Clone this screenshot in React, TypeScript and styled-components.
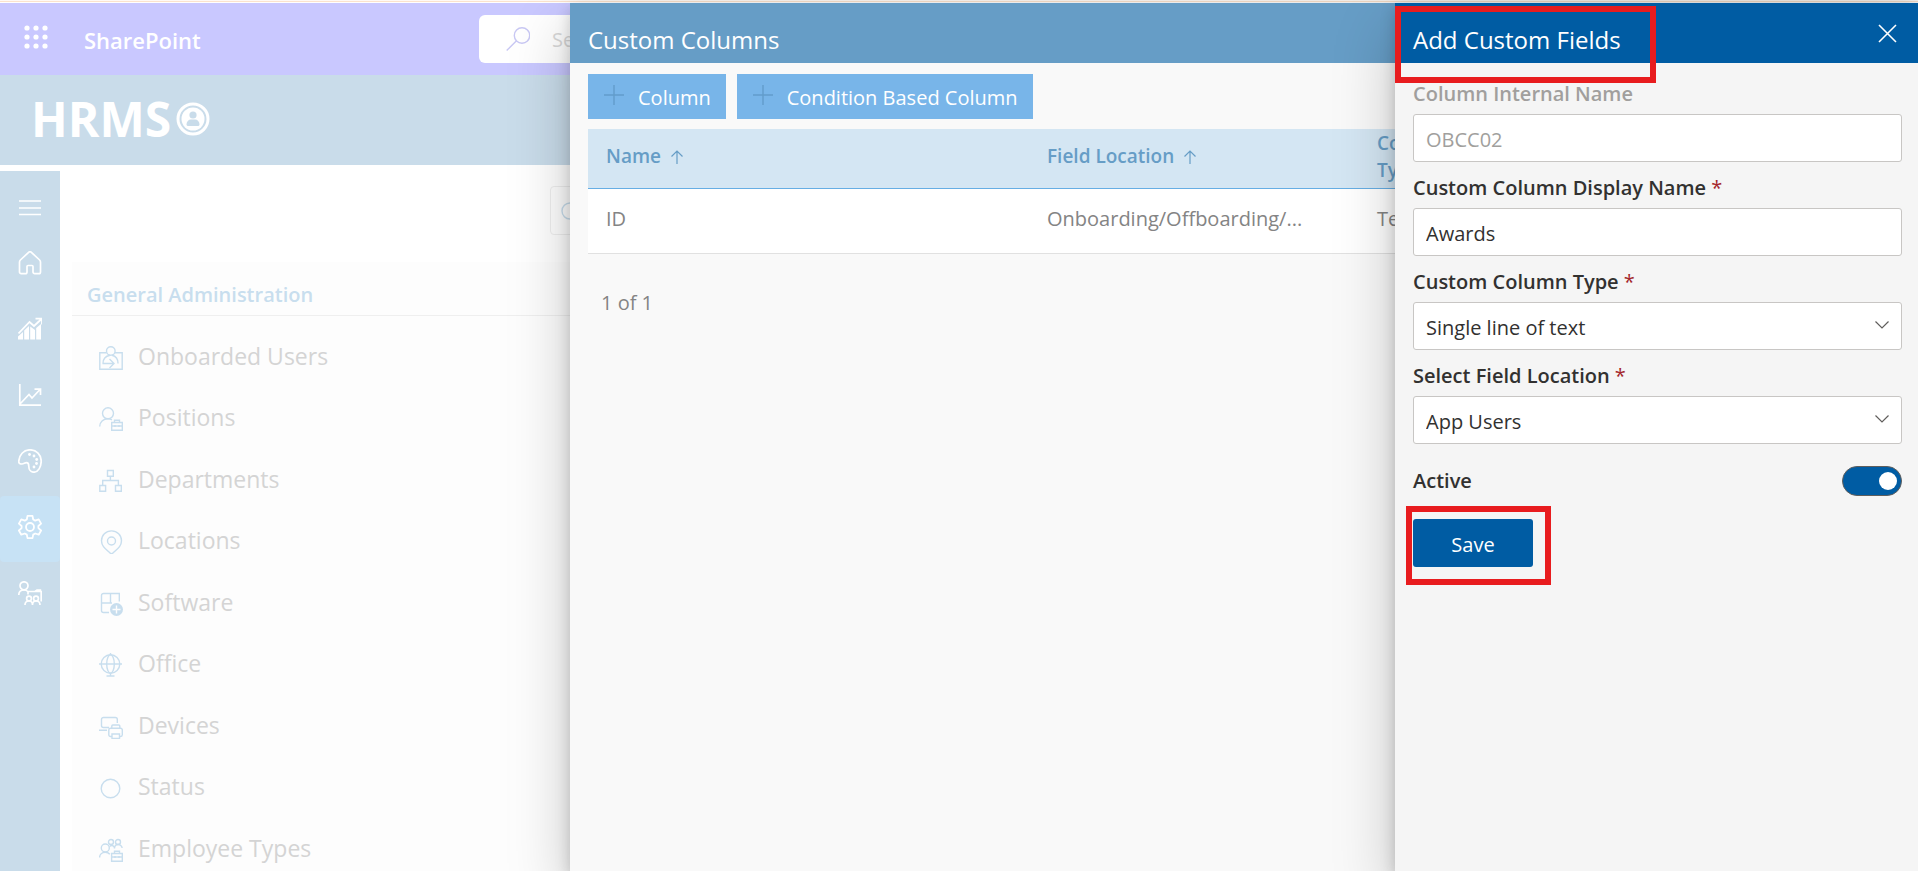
import React, { useState } from "react";
import styled, { createGlobalStyle } from "styled-components";

const sans = `"Segoe UI", "Open Sans", "Noto Sans", sans-serif`;

const GlobalStyle = createGlobalStyle`
  *, *::before, *::after { box-sizing: border-box; }
  body { margin: 0; background: #ffffff; overflow: hidden; font-family: ${sans}; color: #323130; }
  button, input, select { font-family: inherit; }
  h1, h2, p { margin: 0; }
`;

const Page = styled.div`
  display: flex;
  flex-direction: column;
  height: 100vh;
  overflow: hidden;
`;

const TopLine = styled.div`
  flex: none;
  height: 3px;
  border-top: 1px solid #fffaf5;
  background: linear-gradient(#fbe3cd 50%, #ffffff 50%);
`;

const Workspace = styled.div`
  position: relative;
  flex: 1;
  min-height: 0;
  display: flex;
  flex-direction: column;
`;

const SuiteBar = styled.header`
  flex: none;
  display: grid;
  grid-template-columns: 479px minmax(0, 704px);
  align-items: center;
  height: 72px;
  background: #c9c8ff;
`;

const SuiteBrand = styled.div`
  display: flex;
  align-items: center;
  gap: 36px;
  padding-left: 24px;
  color: #ffffff;
`;

const IconButton = styled.button`
  display: flex;
  padding: 0;
  border: 0;
  background: none;
  color: inherit;
  cursor: pointer;
`;

const LauncherButton = styled(IconButton)`
  padding-bottom: 5px;
`;

const SuiteName = styled.a`
  padding-top: 2px;
  color: #ffffff;
  font-size: 22px;
  font-weight: 600;
  line-height: 32px;
  text-decoration: none;
`;

const SearchBox = styled.label`
  display: flex;
  align-items: center;
  gap: 20px;
  height: 48px;
  padding-left: 27px;
  border-radius: 6px;
  background: #ffffff;
  color: #c9c8f4;
`;

const SearchInput = styled.input`
  flex: 1;
  min-width: 0;
  border: 0;
  outline: 0;
  background: none;
  font-size: 20px;
  &::placeholder { color: #d8d8d8; opacity: 1; }
`;

const Banner = styled.div`
  flex: none;
  display: flex;
  align-items: center;
  gap: 5px;
  height: 90px;
  padding: 0 0 2px 31px;
  background: #c9dcea;
  color: #ffffff;
`;

const Logo = styled.span`
  font-size: 48px;
  font-weight: 700;
  line-height: 60px;
`;

const Body = styled.div`
  flex: 1;
  min-height: 0;
  display: flex;
  gap: 12px;
  padding-top: 6px;
`;

const Rail = styled.nav`
  flex: none;
  width: 60px;
  padding-top: 12px;
  background: #c9dcea;
  color: #ffffff;
`;

const RailToggle = styled(IconButton)`
  align-items: center;
  justify-content: center;
  width: 100%;
  height: 49px;
`;

const RailItem = styled.a<{ $active?: boolean }>`
  display: flex;
  align-items: center;
  justify-content: center;
  height: 66px;
  padding-bottom: 4px;
  border-radius: 4px;
  background: ${(p) => (p.$active ? "#c7e2f5" : "transparent")};
  color: inherit;
`;

const Content = styled.main`
  flex: 1;
  min-width: 0;
`;

const Filter = styled.label`
  display: flex;
  align-items: center;
  width: 360px;
  height: 49px;
  margin: 15px 0 27px 478px;
  padding-left: 10px;
  border: 1px solid #efefef;
  border-radius: 4px;
  color: #c9dfee;
`;

const Card = styled.section`
  background: #fdfdfd;
`;

const CardTitle = styled.h2`
  height: 54px;
  padding: 18px 15px 0;
  border-bottom: 1px solid #efefef;
  color: #c8deee;
  font-size: 20px;
  font-weight: 600;
  line-height: 30px;
`;

const Menu = styled.ul`
  margin: 0;
  padding: 10px 0 0 27px;
  list-style: none;
`;

const MenuRow = styled.li`
  height: 61px;
  &:nth-child(even) { height: 62px; }
`;

const MenuLink = styled.a`
  display: flex;
  align-items: center;
  gap: 15px;
  height: 60px;
  color: #d4d4d4;
  font-size: 23px;
  line-height: 32px;
  text-decoration: none;
  svg { flex: none; margin-top: 4px; color: #c8deee; }
`;

const Panel = styled.section<{ $tone: string }>`
  position: absolute;
  top: 0;
  right: 0;
  bottom: 0;
  background: ${(p) => p.$tone};
  box-shadow: 0 26px 58px 0 rgba(0, 0, 0, 0.22), 0 5px 14px 0 rgba(0, 0, 0, 0.18);
`;

const ListPanel = styled(Panel)`
  left: 570px;
`;

const FormPanel = styled(Panel)`
  width: 523px;
`;

const PanelHeader = styled.header<{ $color: string }>`
  position: relative;
  display: flex;
  align-items: center;
  justify-content: space-between;
  height: 60px;
  padding: 13px 17px 0 18px;
  background: ${(p) => p.$color};
  color: #ffffff;
`;

const PanelTitle = styled.h1`
  font-size: 24px;
  font-weight: 400;
  line-height: 32px;
`;

const CloseButton = styled(IconButton)`
  margin-top: -12px;
  padding: 4px;
`;

const ListBody = styled.div`
  padding: 11px 0 0 18px;
`;

const Commands = styled.div`
  display: flex;
  gap: 11px;
  margin-bottom: 10px;
`;

const Command = styled.button`
  display: flex;
  align-items: center;
  gap: 13px;
  height: 45px;
  padding: 2px 15px 0;
  border: 0;
  background: #78b5e9;
  color: #ffffff;
  font-size: 20px;
  line-height: 28px;
  white-space: nowrap;
  cursor: pointer;
  svg { flex: none; margin-bottom: 6px; color: #629ccb; }
`;

const Table = styled.table`
  width: 100%;
  table-layout: fixed;
  border-collapse: separate;
  border-spacing: 0;
`;

const Th = styled.th`
  height: 60px;
  padding: 0 18px 4px;
  border-bottom: 1px solid #66aee4;
  background: #d4e6f3;
  color: #669dc6;
  font-size: 19px;
  font-weight: 600;
  line-height: 27px;
  text-align: left;
  vertical-align: middle;
`;

const SortLabel = styled.span`
  display: flex;
  align-items: center;
  gap: 9px;
`;

const Td = styled.td`
  height: 65px;
  padding: 0 18px 4px;
  overflow: hidden;
  border-bottom: 1px solid #e1e1e1;
  background: #ffffff;
  color: #848484;
  font-size: 20px;
  line-height: 28px;
  text-overflow: ellipsis;
  white-space: nowrap;
`;

const Pager = styled.p`
  padding: 35px 13px;
  color: #848484;
  font-size: 20px;
  line-height: 28px;
`;

const Form = styled.form`
  display: flex;
  flex-direction: column;
  padding: 16px 16px 0 18px;
`;

const Field = styled.div`
  display: flex;
  flex-direction: column;
  gap: 5px;
  margin-bottom: 11px;
`;

const Label = styled.label<{ $muted?: boolean }>`
  color: ${(p) => (p.$muted ? "#a19f9d" : "#323130")};
  font-size: 20px;
  font-weight: 600;
  line-height: 30px;
`;

const Required = styled.span`
  color: #a4262c;
  font-weight: 400;
`;

const TextBox = styled.input`
  width: 100%;
  height: 48px;
  padding: 2px 12px 0;
  border: 1px solid #c8c6c4;
  border-radius: 3px;
  background: #ffffff;
  color: #323130;
  font-size: 20px;
  &:disabled { color: #a19f9d; }
`;

const SelectWrap = styled.div`
  position: relative;
  svg { position: absolute; top: 16px; right: 12px; color: #605e5c; pointer-events: none; }
`;

const Select = styled.select`
  width: 100%;
  height: 48px;
  padding: 2px 40px 0 12px;
  border: 1px solid #c8c6c4;
  border-radius: 3px;
  background: #ffffff;
  color: #323130;
  font-size: 20px;
  appearance: none;
`;

const ToggleRow = styled.div`
  display: flex;
  align-items: center;
  justify-content: space-between;
  margin: 11px 0 23px;
`;

const Toggle = styled.input`
  appearance: none;
  display: flex;
  align-items: center;
  width: 60px;
  height: 30px;
  margin: 0;
  padding: 0 4px;
  border: 1px solid #605e5c;
  border-radius: 15px;
  background: #ffffff;
  cursor: pointer;
  &::before { content: ""; width: 18px; height: 18px; border-radius: 50%; background: #605e5c; }
  &:checked { justify-content: flex-end; background: #005ca3; }
  &:checked::before { background: #ffffff; }
`;

const SaveArea = styled.div`
  position: relative;
  align-self: flex-start;
`;

const SaveButton = styled.button`
  width: 120px;
  height: 48px;
  padding: 4px 0 0;
  border: 0;
  border-radius: 3px;
  background: #005ca3;
  color: #ffffff;
  font-size: 20px;
  line-height: 28px;
  cursor: pointer;
`;

const Callout = styled.div`
  position: absolute;
  border: 6px solid #e81c1e;
  pointer-events: none;
`;

const TitleCallout = styled(Callout)`
  top: 3px;
  left: 0;
  width: 261px;
  height: 77px;
`;

const SaveCallout = styled(Callout)`
  top: -13px;
  left: -7px;
  width: 145px;
  height: 79px;
`;

type IconProps = { width?: number; children: React.ReactNode };

const Icon = ({ width = 1.4, children }: IconProps) => (
  <svg width="24" height="24" viewBox="0 0 24 24" fill="none" stroke="currentColor" strokeWidth={width} aria-hidden="true">
    {children}
  </svg>
);

const Waffle = () => (
  <svg width="24" height="24" viewBox="0 0 24 24" fill="currentColor" aria-hidden="true">
    {[3, 12, 21].map((y) => [3, 12, 21].map((x) => <circle key={`${x}-${y}`} cx={x} cy={y} r="2.6" />))}
  </svg>
);

const railIcons = {
  home: (
    <Icon width={1.7}>
      <path d="M1.5 11.2c0-.9.3-1.6.9-2.2l8.2-7.6a2 2 0 0 1 2.8 0L21.6 9c.6.6.9 1.3.9 2.2V21a1.7 1.7 0 0 1-1.7 1.7h-4A1.7 1.7 0 0 1 15 21v-5.500c0-.6-.4-1-1-1h-4c-.6 0-1 .4-1 1V21a1.700 1.700 0 0 1-1.700 1.700h-4A1.700 1.700 0 0 1 1.500 21z" />
    </Icon>
  ),
  growth: (
    <Icon width={1.8}>
      <path d="M.5 16.500 11.500 5l4.500 4L23 2.500M17.500 1.700H24V7.500" />
      <path d="M0 22.500v-3l5-4.500v7.500zM6.200 22.500v-9l4.800-4.500v13.500zM12.200 22.500V9.500l4.800 3.500v9.500zM18.200 22.500V11l4.800-4v15.500z" fill="currentColor" stroke="none" />
    </Icon>
  ),
  line: (
    <Icon width={1.7}>
      <path d="M1.800 1v21.200H23M2 21l9-9.500 3 3.500 8-8.500M16.500 6.200H22.500V12" />
    </Icon>
  ),
  palette: (
    <Icon width={1.7}>
      <path d="M.8 13C.6 6 6 .8 12 .8c6.500 0 11.200 5 11.200 11.200 0 6-3 11.200-7.400 11.200-3.400 0-5-3-5-6 0-2.400-.8-3.600-2.300-3.600-1.800 0-2.600 1.400-4.500 1.400C2.200 15 .9 14.300.8 13z" />
      <g fill="currentColor" stroke="none">
        <circle cx="11.5" cy="5.5" r="1.4" />
        <circle cx="16" cy="7" r="1.4" />
        <circle cx="18.7" cy="10.5" r="1.4" />
        <circle cx="18.5" cy="14.500" r="1.4" />
        <circle cx="16" cy="18" r="1.4" />
      </g>
    </Icon>
  ),
  gear: (
    <Icon width={1.8}>
      <circle cx="12" cy="12" r="4" />
      <path strokeLinejoin="round" d="M9.500.9h5l.7 3.600 2 1.100 3.500-1.200 2.400 4.200-2.700 2.400v2.100l2.700 2.400-2.400 4.200-3.500-1.200-2 1.100-.7 3.500h-5l-.7-3.500-2-1.100-3.500 1.200-2.400-4.200 2.700-2.400V11L.9 8.600l2.400-4.200 3.500 1.200 2-1.100z" />
    </Icon>
  ),
  team: (
    <Icon width={1.7}>
      <circle cx="6" cy="4.800" r="4" />
      <path d="M.8 14c0-3 2-5 5.200-5 1.600 0 2.800.5 3.800 1.500M10 13.500V10.500h13.200v10M17 10.500l2-1.500h4.200" />
      <circle cx="11" cy="17.500" r="2.400" />
      <circle cx="18" cy="17.500" r="2.400" />
      <path d="M7 24c0-2.500 1.500-4 4-4s3.500 1.500 3.500 4c0-2.500 1-4 3.500-4s4 1.500 4 4" />
    </Icon>
  ),
};

const menuItems: { label: string; icon: React.ReactNode }[] = [
  {
    label: "Onboarded Users",
    icon: (
      <>
        <path d="M7.500 6.700H.8v16.500h22.400V6.700H16" />
        <circle cx="11.800" cy="5" r="4.300" />
        <path d="M4 17.500c0-5 3-7.500 7-8.200M13 9.300c3.500.7 6 3.700 6 8.200M3.500 17.500h11M10.500 13l4.500 4.500-4.500 4.500" />
      </>
    ),
  },
  {
    label: "Positions",
    icon: (
      <>
        <circle cx="9" cy="6.300" r="5.500" />
        <path d="M.7 19.500c0-4.500 3.500-7.700 8.300-7.700 1.500 0 2.700.3 4 1M12.700 15.500h10.600v7.800H12.700zM15.500 15.500v-2.300h5v2.300M12.700 19h10.600M16 18v2M20 18v2" />
      </>
    ),
  },
  {
    label: "Departments",
    icon: <path d="M8.500 1.500h5.800v5.800H8.500zM.8 16.500h5.800v5.800H.8zM16.500 16.500h5.800v5.800h-5.800zM11.400 7.300v4.200M3.700 16.500v-5h15.700v5" />,
  },
  {
    label: "Locations",
    icon: (
      <>
        <path d="M12.500.9c-5.700 0-10 4.300-10 9.800 0 5.300 3.800 8 8.500 12.300.9.800 2.100.8 3 0 4.700-4.300 8.500-7 8.500-12.300 0-5.500-4.300-9.800-10-9.800z" />
        <circle cx="12.500" cy="11" r="4" />
      </>
    ),
  },
  {
    label: "Software",
    icon: (
      <>
        <path d="M10 20.500H4.500a2 2 0 0 1-2-2v-15a2 2 0 0 1 2-2H20.300v8M2.500 11H13M11.500 1.500V11" />
        <circle cx="17.500" cy="17.500" r="6.500" fill="currentColor" stroke="none" />
        <path stroke="#fdfdfd" d="M17.500 13.500v8M13.500 17.500h8" />
      </>
    ),
  },
  {
    label: "Office",
    icon: (
      <>
        <circle cx="11.500" cy="11" r="9.300" />
        <ellipse cx="11.500" cy="11" rx="3.800" ry="9.300" />
        <path d="M0 11h23M11.500 0v1.700M11.500 20.300V23M7.500 23h8" />
      </>
    ),
  },
  {
    label: "Devices",
    icon: (
      <path d="M10 12.500H4.500a2 2 0 0 1-2-2v-6a2 2 0 0 1 2-2h11.800a2 2 0 0 1 2 2V8M0 15.200h8M12.800 13V11a1 1 0 0 1 1-1h6a1 1 0 0 1 1 1v2M13 21.500h-1.500a1.700 1.700 0 0 1-1.700-1.700V15a1.700 1.700 0 0 1 1.700-1.700h10A1.700 1.700 0 0 1 23.300 15v4.800a1.700 1.700 0 0 1-1.700 1.700h-1.200M13 19h7.500v4.500H13z" />
    ),
  },
  { label: "Status", icon: <circle cx="11.500" cy="12.500" r="9.300" /> },
  {
    label: "Employee Types",
    icon: (
      <>
        <circle cx="6.300" cy="10" r="4" />
        <path d="M.6 19.500c0-3 2.400-5.200 5.700-5.200 2 0 3.400.7 4.500 2M12.600 15.500h10.700v7.800H12.600zM15.500 15.500v-2.300h5v2.300M12.600 19h10.700M16 18v2M20 18v2" />
        <circle cx="12" cy="4" r="2.500" />
        <circle cx="19" cy="4" r="2.500" />
        <path d="M10.500 8.500c3-2.500 5 0 5 2 0-3 2-4 3.700-4s3.900 1.500 3.900 3.500" />
      </>
    ),
  },
];

const SortArrow = () => (
  <svg width="14" height="16" viewBox="0 0 14 16" fill="none" stroke="currentColor" strokeWidth="1.2" aria-hidden="true">
    <path d="M7 15V2M1.500 7.500 7 2l5.500 5.500" />
  </svg>
);

const Plus = () => (
  <svg width="22" height="22" viewBox="0 0 22 22" stroke="currentColor" strokeWidth="1.4" aria-hidden="true">
    <path d="M11 1v20M1 11h20" />
  </svg>
);

const Chevron = () => (
  <svg width="16" height="14" viewBox="0 0 16 14" fill="none" stroke="currentColor" strokeWidth="1.2" aria-hidden="true">
    <path d="m1.500 3.500 6.500 6.500 6.500-6.500" />
  </svg>
);

export default function App() {
  const [name, setName] = useState("Awards");
  const [active, setActive] = useState(true);

  return (
    <>
      <GlobalStyle />
      <Page>
        <TopLine />
        <Workspace>
          <SuiteBar>
            <SuiteBrand>
              <LauncherButton type="button" aria-label="App launcher"><Waffle /></LauncherButton>
              <SuiteName href="#">SharePoint</SuiteName>
            </SuiteBrand>
            <SearchBox>
              <Icon><circle cx="16" cy="8.500" r="7.700" /><path d="M10.500 13.800.7 23.500" /></Icon>
              <SearchInput type="search" placeholder="Search" aria-label="Search" />
            </SearchBox>
          </SuiteBar>

          <Banner>
            <Logo>HRMS</Logo>
            <svg width="34" height="34" viewBox="0 0 34 34" aria-hidden="true">
              <circle cx="17" cy="17" r="15" fill="none" stroke="#ffffff" strokeWidth="3" />
              <circle cx="17" cy="17" r="11.500" fill="#ffffff" />
              <circle cx="17" cy="13" r="3.600" fill="#c9dcea" />
              <path d="M10.500 22.500c0-3 2-5 4.500-5h4c2.500 0 4.500 2 4.500 5 0 1-1 1.500-2 1.500h-9c-1 0-2-.5-2-1.500z" fill="#c9dcea" />
            </svg>
          </Banner>

          <Body>
            <Rail aria-label="Main">
              <RailToggle type="button" aria-label="Toggle menu">
                <Icon width={1.7}><path d="M1 5h22M1 12h22M1 18.500h22" /></Icon>
              </RailToggle>
              <RailItem href="#" aria-label="Home">{railIcons.home}</RailItem>
              <RailItem href="#" aria-label="Dashboard">{railIcons.growth}</RailItem>
              <RailItem href="#" aria-label="Reports">{railIcons.line}</RailItem>
              <RailItem href="#" aria-label="Theme">{railIcons.palette}</RailItem>
              <RailItem href="#" aria-label="Settings" $active>{railIcons.gear}</RailItem>
              <RailItem href="#" aria-label="Training">{railIcons.team}</RailItem>
            </Rail>
            <Content>
              <Filter>
                <Icon><circle cx="9" cy="12" r="8" /><path d="m15 18 6 6" /></Icon>
                <SearchInput type="search" aria-label="Search settings" />
              </Filter>
              <Card>
                <CardTitle>General Administration</CardTitle>
                <Menu>
                  {menuItems.map((item) => (
                    <MenuRow key={item.label}>
                      <MenuLink href="#"><Icon>{item.icon}</Icon>{item.label}</MenuLink>
                    </MenuRow>
                  ))}
                </Menu>
              </Card>
            </Content>
          </Body>

          <ListPanel $tone="#f9f9f9" aria-label="Custom Columns">
            <PanelHeader $color="#669dc6"><PanelTitle>Custom Columns</PanelTitle></PanelHeader>
            <ListBody>
              <Commands>
                <Command type="button"><Plus />Column</Command>
                <Command type="button"><Plus />Condition Based Column</Command>
              </Commands>
              <Table>
                <colgroup><col width="441" /><col width="330" /><col width="120" /><col /></colgroup>
                <thead>
                  <tr>
                    <Th scope="col"><SortLabel>Name<SortArrow /></SortLabel></Th>
                    <Th scope="col"><SortLabel>Field Location<SortArrow /></SortLabel></Th>
                    <Th scope="col">Column Type</Th>
                    <Th aria-hidden="true" />
                  </tr>
                </thead>
                <tbody>
                  <tr><Td>ID</Td><Td>Onboarding/Offboarding/...</Td><Td>Text</Td><Td /></tr>
                </tbody>
              </Table>
              <Pager>1 of 1</Pager>
            </ListBody>
          </ListPanel>

          <FormPanel $tone="#f5f5f5" role="dialog" aria-label="Add Custom Fields">
            <PanelHeader $color="#005ca3">
              <PanelTitle>Add Custom Fields</PanelTitle>
              <CloseButton type="button" aria-label="Close">
                <svg width="19" height="19" viewBox="0 0 19 19" stroke="currentColor" strokeWidth="1.6" aria-hidden="true">
                  <path d="m1 1 17 17M18 1 1 18" />
                </svg>
              </CloseButton>
              <TitleCallout />
            </PanelHeader>
            <Form onSubmit={(e) => e.preventDefault()}>
              <Field>
                <Label $muted htmlFor="internal">Column Internal Name</Label>
                <TextBox id="internal" value="OBCC02" disabled readOnly />
              </Field>
              <Field>
                <Label htmlFor="display">Custom Column Display Name <Required>*</Required></Label>
                <TextBox id="display" value={name} onChange={(e) => setName(e.target.value)} />
              </Field>
              <Field>
                <Label htmlFor="type">Custom Column Type <Required>*</Required></Label>
                <SelectWrap>
                  <Select id="type"><option>Single line of text</option></Select>
                  <Chevron />
                </SelectWrap>
              </Field>
              <Field>
                <Label htmlFor="location">Select Field Location <Required>*</Required></Label>
                <SelectWrap>
                  <Select id="location"><option>App Users</option></Select>
                  <Chevron />
                </SelectWrap>
              </Field>
              <ToggleRow>
                <Label htmlFor="active">Active</Label>
                <Toggle id="active" type="checkbox" role="switch" checked={active} onChange={(e) => setActive(e.target.checked)} />
              </ToggleRow>
              <SaveArea>
                <SaveButton type="submit">Save</SaveButton>
                <SaveCallout />
              </SaveArea>
            </Form>
          </FormPanel>
        </Workspace>
      </Page>
    </>
  );
}
